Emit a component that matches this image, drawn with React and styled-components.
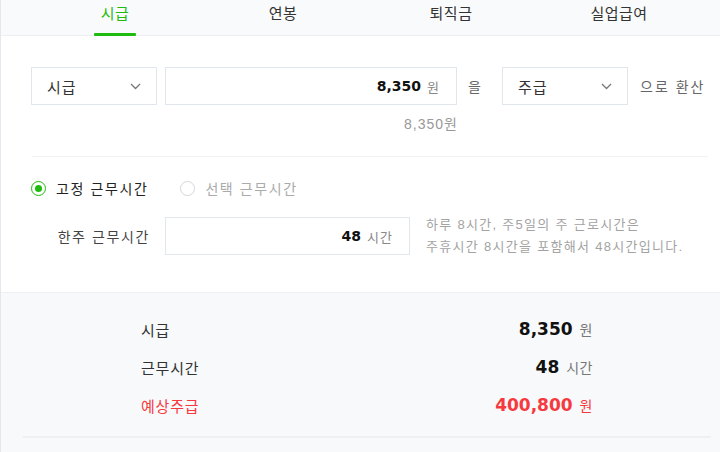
import React from "react";
import styled, { createGlobalStyle } from "styled-components";

const GREEN = "#1fbb0e";
const RED = "#f5393f";

const GlobalStyle = createGlobalStyle`
  html, body {
    margin: 0;
    padding: 0;
    background: #fff;
  }
  body {
    font-family: "Liberation Sans", "Noto Sans CJK KR", sans-serif;
    color: #222;
  }
`;

const Page = styled.div`
  width: 720px;
  height: 452px;
  box-sizing: border-box;
  border-left: 1px solid #e4e7ed;
  overflow: hidden;
  display: flex;
  flex-direction: column;
`;

const TabBar = styled.div`
  height: 36px;
  box-sizing: border-box;
  background: #f9fafc;
  border-bottom: 1px solid #eceef2;
  padding-left: 30px;
  display: grid;
  grid-template-columns: repeat(4, 168px);
`;

const Tab = styled.div`
  position: relative;
  text-align: center;
  font-size: 15px;
  line-height: 28px;
  letter-spacing: 0.5px;
  color: ${p => (p.active ? GREEN : "#333")};

  &::after {
    content: "";
    display: ${p => (p.active ? "block" : "none")};
    position: absolute;
    left: 63px;
    bottom: -1px;
    width: 42px;
    height: 3px;
    border-radius: 1px;
    background: ${GREEN};
  }
`;

const Form = styled.div`
  padding: 31px 12px 0 30px;
`;

const Row = styled.div`
  display: flex;
  align-items: center;
`;

const SelectBox = styled.div`
  width: 126px;
  height: 38px;
  box-sizing: border-box;
  border: 1px solid #e1e5ec;
  padding: 0 15px 0 15px;
  display: flex;
  align-items: center;
  justify-content: space-between;
  font-size: 15px;
  letter-spacing: 1px;
  color: #333;
`;

const InputBox = styled.div`
  width: ${p => p.width}px;
  height: 38px;
  box-sizing: border-box;
  border: 1px solid #e1e5ec;
  margin-left: ${p => p.gap || 0}px;
  padding-right: 16px;
  display: flex;
  align-items: center;
  justify-content: flex-end;
  gap: 6px;
`;

const Value = styled.span`
  font-family: "DejaVu Sans", sans-serif;
  font-weight: bold;
  font-size: 14px;
  color: #111;
`;

const Unit = styled.span`
  font-size: 13px;
  color: #888;
  letter-spacing: 1px;
`;

const Joiner = styled.span`
  width: 45px;
  box-sizing: border-box;
  padding-left: 11px;
  font-size: 14px;
  color: #666;
`;

const Suffix = styled.span`
  margin-left: 12px;
  font-size: 14px;
  color: #666;
  letter-spacing: 2px;
`;

const Converted = styled.div`
  width: 427px;
  text-align: right;
  margin-top: 11px;
  font-size: 14px;
  line-height: 16px;
  letter-spacing: 1px;
  color: #999;
`;

const Divider = styled.div`
  height: 1px;
  background: #f1f2f5;
  margin: 24px 0 0 1px;
`;

const RadioRow = styled.div`
  display: flex;
  align-items: center;
  gap: 32px;
  margin-top: 21px;
  height: 20px;
`;

const RadioLabel = styled.label`
  display: flex;
  align-items: center;
  gap: 10px;
  font-size: 14px;
  color: ${p => (p.checked ? "#222" : "#aaa")};
  letter-spacing: 1.6px;
`;

const RadioDot = styled.span`
  width: 15px;
  height: 15px;
  box-sizing: border-box;
  border-radius: 50%;
  border: 1.5px solid ${p => (p.checked ? GREEN : "#d6d6d6")};
  display: flex;
  align-items: center;
  justify-content: center;

  &::after {
    content: "";
    width: 7px;
    height: 7px;
    border-radius: 50%;
    background: ${GREEN};
    display: ${p => (p.checked ? "block" : "none")};
  }
`;

const HoursRow = styled.div`
  display: flex;
  align-items: center;
  margin-top: 16px;
`;

const FieldLabel = styled.div`
  width: 134px;
  box-sizing: border-box;
  padding-right: 15px;
  text-align: right;
  font-size: 14px;
  color: #444;
  letter-spacing: 1.6px;
`;

const Help = styled.div`
  margin-left: 16px;
  font-size: 13px;
  line-height: 22px;
  color: #a3a3a3;
  letter-spacing: 1.3px;
  white-space: nowrap;
`;

const Summary = styled.div`
  flex: 1;
  margin-top: 34px;
  background: #f8f9fb;
  border-top: 1px solid #eef0f4;
  padding: 17px 0 0;
`;

const SummaryList = styled.div`
  padding: 0 127px 0 140px;
`;

const SummaryRow = styled.div`
  height: 38px;
  display: flex;
  align-items: center;
  justify-content: space-between;
`;

const SummaryLabel = styled.span`
  font-size: 15px;
  letter-spacing: 0.8px;
  color: ${p => (p.highlight ? RED : "#333")};
`;

const SummaryValue = styled.span`
  display: flex;
  align-items: baseline;
  gap: 7px;
`;

const BigNumber = styled.span`
  font-family: "DejaVu Sans", sans-serif;
  font-size: 17px;
  font-weight: bold;
  color: ${p => (p.highlight ? RED : "#111")};
`;

const SummaryUnit = styled.span`
  font-size: 14px;
  letter-spacing: 0.5px;
  color: ${p => (p.highlight ? RED : "#777")};
`;

const BottomLine = styled.div`
  height: 2px;
  background: #eef0f4;
  margin: 12px 9px 0 22px;
`;

const Chevron = () => (
  <svg width="11" height="7" viewBox="0 0 11 7">
    <polyline points="1,1 5.5,5.5 10,1" fill="none" stroke="#777" strokeWidth="1.3" />
  </svg>
);

const tabs = ["시급", "연봉", "퇴직금", "실업급여"];

const summary = [
  { label: "시급", value: "8,350", unit: "원" },
  { label: "근무시간", value: "48", unit: "시간" },
  { label: "예상주급", value: "400,800", unit: "원", highlight: true }
];

const App = () => (
  <Page>
    <GlobalStyle />
    <TabBar>
      {tabs.map((t, i) => (
        <Tab key={t} active={i === 0}>
          {t}
        </Tab>
      ))}
    </TabBar>
    <Form>
      <Row>
        <SelectBox>
          시급
          <Chevron />
        </SelectBox>
        <InputBox width={292} gap={8}>
          <Value>8,350</Value>
          <Unit>원</Unit>
        </InputBox>
        <Joiner>을</Joiner>
        <SelectBox>
          주급
          <Chevron />
        </SelectBox>
        <Suffix>으로 환산</Suffix>
      </Row>
      <Converted>8,350원</Converted>
      <Divider />
      <RadioRow>
        <RadioLabel checked>
          <RadioDot checked />
          고정 근무시간
        </RadioLabel>
        <RadioLabel>
          <RadioDot />
          선택 근무시간
        </RadioLabel>
      </RadioRow>
      <HoursRow>
        <FieldLabel>한주 근무시간</FieldLabel>
        <InputBox width={245}>
          <Value>48</Value>
          <Unit>시간</Unit>
        </InputBox>
        <Help>
          하루 8시간, 주5일의 주 근로시간은
          <br />
          주휴시간 8시간을 포함해서 48시간입니다.
        </Help>
      </HoursRow>
    </Form>
    <Summary>
      <SummaryList>
        {summary.map(s => (
          <SummaryRow key={s.label}>
            <SummaryLabel highlight={s.highlight}>{s.label}</SummaryLabel>
            <SummaryValue>
              <BigNumber highlight={s.highlight}>{s.value}</BigNumber>
              <SummaryUnit highlight={s.highlight}>{s.unit}</SummaryUnit>
            </SummaryValue>
          </SummaryRow>
        ))}
      </SummaryList>
      <BottomLine />
    </Summary>
  </Page>
);

export default App;
